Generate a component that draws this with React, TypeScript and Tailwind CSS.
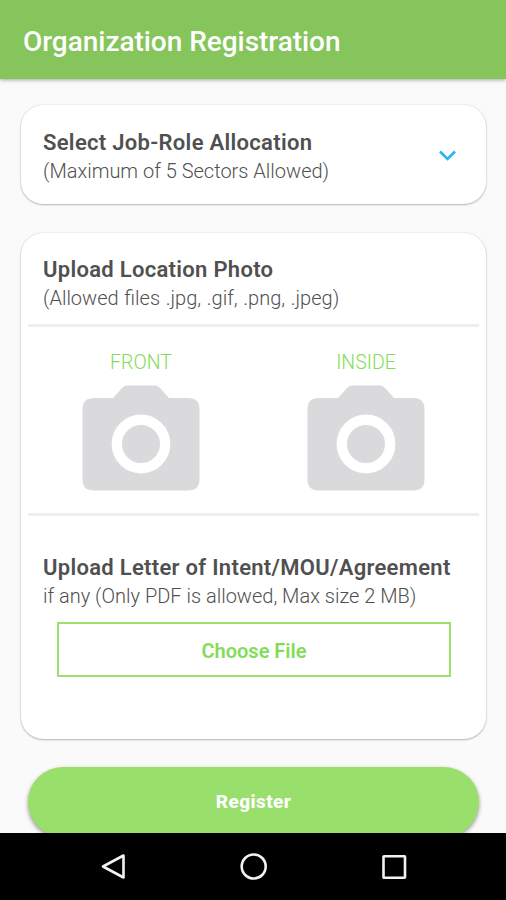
import type { ReactNode } from "react";

function Card({ className, children }: { className: string; children: ReactNode }) {
  return (
    <section
      className={`ml-[21px] w-[465px] shrink-0 rounded-[22px] bg-white shadow-[0_1px_2px_rgba(0,0,0,0.25),0_0_2px_rgba(0,0,0,0.14)] ${className}`}
    >
      {children}
    </section>
  );
}

function CardHeading({
  title,
  note,
  noteClass = "",
}: {
  title: string;
  note: string;
  noteClass?: string;
}) {
  return (
    <div className="whitespace-nowrap text-[#505050]">
      <h2 className="text-[22px] leading-[28px] font-semibold tracking-[0.3px]">{title}</h2>
      <p className={`text-[20px] leading-[29px] font-light ${noteClass}`}>{note}</p>
    </div>
  );
}

function PhotoSlot({ label }: { label: string }) {
  return (
    <button className="flex w-[118px] flex-col items-center">
      <span className="text-[19.5px] leading-[28px] font-light text-[#82dc58]">{label}</span>
      <svg className="mt-[8px] h-[106px] w-[118px]" viewBox="0 0 118 106" fill="none">
        <path
          d="M12 13H31L40.500 2.500Q42.500 0.500 45 0.500H73Q75.500 0.500 77.500 2.500L87 13H106Q117.500 13 117.500 24V94.500Q117.500 105.500 106 105.500H12Q0.500 105.500 0.500 94.500V24Q0.500 13 12 13Z"
          fill="#dadadc"
        />
        <circle cx="59" cy="59" r="24.200" stroke="#fff" strokeWidth="10.400" />
      </svg>
    </button>
  );
}

function NavBar() {
  return (
    <nav className="flex h-[67px] shrink-0 items-center justify-center gap-[112px] bg-black pl-px">
      <svg className="size-7" viewBox="0 0 28 28" fill="none" stroke="#f2f2f2" strokeWidth="2.600">
        <path d="M23.500 2.500V24.500L3 13.500Z" strokeLinejoin="round" />
      </svg>
      <svg className="size-7" viewBox="0 0 28 28" fill="none" stroke="#f2f2f2" strokeWidth="2.600">
        <circle cx="13.700" cy="13.500" r="12" />
      </svg>
      <svg className="size-7" viewBox="0 0 28 28" fill="none" stroke="#f2f2f2" strokeWidth="2.600">
        <rect x="3.500" y="3.300" width="21.500" height="21.500" rx="0.500" />
      </svg>
    </nav>
  );
}

export default function App() {
  return (
    <div className="flex h-[900px] w-[506px] flex-col overflow-hidden bg-[#fafafa] font-[Roboto,sans-serif]">
      <header className="z-10 flex h-[79px] shrink-0 items-center bg-[#86c45c] pt-[4px] pl-[23px] shadow-[0_1px_4px_rgba(0,0,0,0.35)]">
        <h1 className="text-[28px] leading-[36px] font-medium tracking-[-0.04px] whitespace-nowrap text-white">
          Organization Registration
        </h1>
      </header>

      <main className="flex min-h-0 flex-1 flex-col overflow-hidden pt-[26px]">
        <Card className="flex h-[99px] items-center justify-between pt-[5px] pr-[30px] pl-[22px]">
          <CardHeading
            title="Select Job-Role Allocation"
            note="(Maximum of 5 Sectors Allowed)"
          />
          <svg
            className="mb-[3px] h-[12px] w-[17px]"
            viewBox="0 0 17 12"
            fill="none"
            stroke="#29b6f0"
            strokeWidth="2.600"
          >
            <path d="M1 1.500L8.500 9L16 1.500" />
          </svg>
        </Card>

        <Card className="mt-[29px] h-[506px] px-[7px] pt-[23px]">
          <div className="px-[15px]">
            <CardHeading
              title="Upload Location Photo"
              note="(Allowed files .jpg, .gif, .png, .jpeg)"
              noteClass="[word-spacing:0.8px]"
            />
          </div>
          <div className="mt-[11px] flex h-[192px] justify-between border-y-[3px] border-[#eeeeee] px-[54px] pt-[22px]">
            <PhotoSlot label="FRONT" />
            <PhotoSlot label="INSIDE" />
          </div>
          <div className="mt-[38px] px-[15px]">
            <CardHeading
              title="Upload Letter of Intent/MOU/Agreement"
              note="if any (Only PDF is allowed, Max size 2 MB)"
            />
          </div>
          <button className="mt-[11px] ml-[29px] block h-[55px] w-[394px] border-2 border-[#9be073] pt-[2px] text-[20px] font-semibold text-[#82dc58]">
            Choose File
          </button>
        </Card>

        <button className="ml-[28px] mt-[28px] h-[70px] w-[451px] shrink-0 rounded-full bg-[#99df6b] text-[19px] font-extrabold tracking-[0.4px] text-white shadow-[0_2px_4px_rgba(0,0,0,0.4)]">
          Register
        </button>
      </main>

      <NavBar />
    </div>
  );
}
